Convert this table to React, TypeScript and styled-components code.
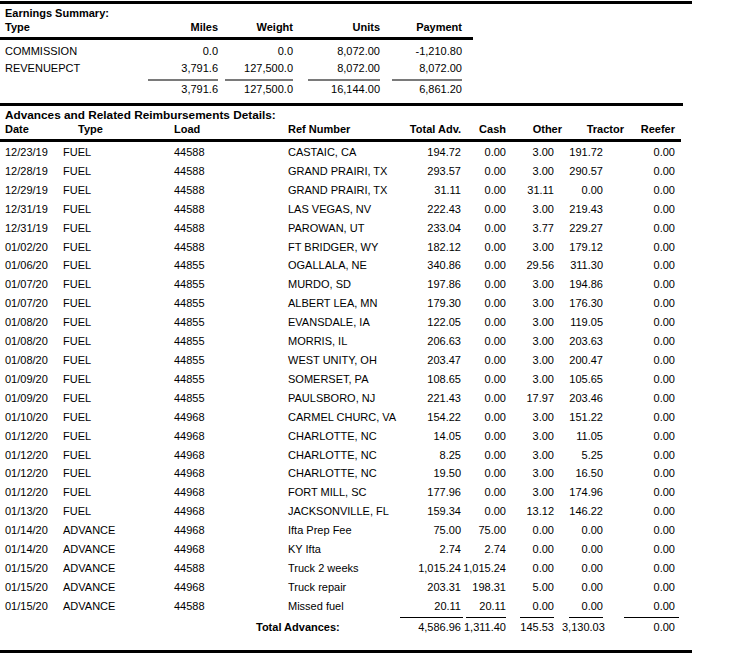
import React from 'react';
import styled, {createGlobalStyle} from 'styled-components';

const GlobalStyle = createGlobalStyle`
    body {
        margin: 0;
        background: #fff;
        color: #000;
        font-family: "Liberation Sans", Arial, sans-serif;
        font-size: 11px;
    }
`;

const Page = styled.div`
    width: 692px;
    display: flex;
    flex-direction: column;
`;

const Rule = styled.div<{$w: number; $t?: number; $mt?: number}>`
    width: ${p => p.$w}px;
    border-top: ${p => p.$t ?? 3}px solid #000;
    margin-top: ${p => p.$mt ?? 0}px;
`;

const SectionTitle = styled.div<{$size?: number}>`
    font-weight: bold;
    font-size: ${p => p.$size ?? 11}px;
    line-height: 14px;
    padding: 2px 0 0 5px;
`;

const Table = styled.table`
    border-collapse: collapse;
    table-layout: fixed;
`;

const Th = styled.th<{$align: string; $pl?: number; $pr?: number}>`
    font-weight: bold;
    height: 14px;
    line-height: 14px;
    padding: 0 ${p => p.$pr ?? 0}px 0 ${p => p.$pl ?? 0}px;
    text-align: ${p => p.$align};
    white-space: nowrap;
`;

const Td = styled.td<{$align: string; $pl?: number; $pr?: number; $h: number}>`
    height: ${p => p.$h}px;
    line-height: ${p => p.$h}px;
    padding: 0 ${p => p.$pr ?? 0}px 0 ${p => p.$pl ?? 0}px;
    text-align: ${p => p.$align};
    white-space: nowrap;
    font-weight: normal;
`;

const LineCell = styled.td<{$pt: number}>`
    padding: ${p => p.$pt}px 0 0 0;
    vertical-align: top;
`;

const SumLine = styled.div<{$w: number; $color: string; $t: number; $pr?: number}>`
    width: ${p => p.$w}px;
    margin-left: auto;
    margin-right: ${p => p.$pr ?? 0}px;
    border-top: ${p => p.$t}px solid ${p => p.$color};
`;

const TotalLabel = styled.td`
    font-weight: bold;
    padding-left: 256px;
    height: 17px;
    line-height: 17px;
`;

type Col = {w: number; label: string; align: string; hpl?: number; hpr?: number; pl?: number; pr?: number; line?: number};

const earnCols: Col[] = [
    {w: 148, label: 'Type', align: 'left', hpl: 5, pl: 5},
    {w: 70, label: 'Miles', align: 'right', line: 70},
    {w: 75, label: 'Weight', align: 'right', line: 68},
    {w: 87, label: 'Units', align: 'right', line: 72},
    {w: 82, label: 'Payment', align: 'right', line: 70},
];

const earnRows = [
    ['COMMISSION', '0.0', '0.0', '8,072.00', '-1,210.80'],
    ['REVENUEPCT', '3,791.6', '127,500.0', '8,072.00', '8,072.00'],
];
const earnTotals = ['', '3,791.6', '127,500.0', '16,144.00', '6,861.20'];

const advCols: Col[] = [
    {w: 63, label: 'Date', align: 'left', hpl: 5, pl: 5},
    {w: 111, label: 'Type', align: 'left', hpl: 15},
    {w: 114, label: 'Load', align: 'left'},
    {w: 112, label: 'Ref Number', align: 'left'},
    {w: 61, label: 'Total Adv.', align: 'right', line: 63},
    {w: 45, label: 'Cash', align: 'right', line: 40},
    {w: 56, label: 'Other', align: 'right', pr: 8, line: 34},
    {w: 62, label: 'Tractor', align: 'right', pr: 21, line: 34},
    {w: 51, label: 'Reefer', align: 'right', line: 55},
];

const advRows = [
    ['12/23/19', 'FUEL', '44588', 'CASTAIC, CA', '194.72', '0.00', '3.00', '191.72', '0.00'],
    ['12/28/19', 'FUEL', '44588', 'GRAND PRAIRI, TX', '293.57', '0.00', '3.00', '290.57', '0.00'],
    ['12/29/19', 'FUEL', '44588', 'GRAND PRAIRI, TX', '31.11', '0.00', '31.11', '0.00', '0.00'],
    ['12/31/19', 'FUEL', '44588', 'LAS VEGAS, NV', '222.43', '0.00', '3.00', '219.43', '0.00'],
    ['12/31/19', 'FUEL', '44588', 'PAROWAN, UT', '233.04', '0.00', '3.77', '229.27', '0.00'],
    ['01/02/20', 'FUEL', '44588', 'FT BRIDGER, WY', '182.12', '0.00', '3.00', '179.12', '0.00'],
    ['01/06/20', 'FUEL', '44855', 'OGALLALA, NE', '340.86', '0.00', '29.56', '311.30', '0.00'],
    ['01/07/20', 'FUEL', '44855', 'MURDO, SD', '197.86', '0.00', '3.00', '194.86', '0.00'],
    ['01/07/20', 'FUEL', '44855', 'ALBERT LEA, MN', '179.30', '0.00', '3.00', '176.30', '0.00'],
    ['01/08/20', 'FUEL', '44855', 'EVANSDALE, IA', '122.05', '0.00', '3.00', '119.05', '0.00'],
    ['01/08/20', 'FUEL', '44855', 'MORRIS, IL', '206.63', '0.00', '3.00', '203.63', '0.00'],
    ['01/08/20', 'FUEL', '44855', 'WEST UNITY, OH', '203.47', '0.00', '3.00', '200.47', '0.00'],
    ['01/09/20', 'FUEL', '44855', 'SOMERSET, PA', '108.65', '0.00', '3.00', '105.65', '0.00'],
    ['01/09/20', 'FUEL', '44855', 'PAULSBORO, NJ', '221.43', '0.00', '17.97', '203.46', '0.00'],
    ['01/10/20', 'FUEL', '44968', 'CARMEL CHURC, VA', '154.22', '0.00', '3.00', '151.22', '0.00'],
    ['01/12/20', 'FUEL', '44968', 'CHARLOTTE, NC', '14.05', '0.00', '3.00', '11.05', '0.00'],
    ['01/12/20', 'FUEL', '44968', 'CHARLOTTE, NC', '8.25', '0.00', '3.00', '5.25', '0.00'],
    ['01/12/20', 'FUEL', '44968', 'CHARLOTTE, NC', '19.50', '0.00', '3.00', '16.50', '0.00'],
    ['01/12/20', 'FUEL', '44968', 'FORT MILL, SC', '177.96', '0.00', '3.00', '174.96', '0.00'],
    ['01/13/20', 'FUEL', '44968', 'JACKSONVILLE, FL', '159.34', '0.00', '13.12', '146.22', '0.00'],
    ['01/14/20', 'ADVANCE', '44968', 'Ifta Prep Fee', '75.00', '75.00', '0.00', '0.00', '0.00'],
    ['01/14/20', 'ADVANCE', '44968', 'KY Ifta', '2.74', '2.74', '0.00', '0.00', '0.00'],
    ['01/15/20', 'ADVANCE', '44588', 'Truck 2 weeks', '1,015.24', '1,015.24', '0.00', '0.00', '0.00'],
    ['01/15/20', 'ADVANCE', '44968', 'Truck repair', '203.31', '198.31', '5.00', '0.00', '0.00'],
    ['01/15/20', 'ADVANCE', '44588', 'Missed fuel', '20.11', '20.11', '0.00', '0.00', '0.00'],
];
const advTotals = ['4,586.96', '1,311.40', '145.53', '3,130.03', '0.00'];

function ColGroup({cols}: {cols: Col[]}) {
    return (
        <colgroup>
            {cols.map((c, i) => <col key={i} style={{width: c.w}} />)}
        </colgroup>
    );
}

export default function App() {
    const numCols = advCols.slice(4);

    return (
        <Page>
            <GlobalStyle />
            <Rule $w={692} $mt={1} />

            {/* earnings */}
            <SectionTitle>Earnings Summary:</SectionTitle>
            <Table style={{width: 462}}>
                <ColGroup cols={earnCols} />
                <thead>
                    <tr>
                        {earnCols.map((c, i) => (
                            <Th key={i} $align={c.align} $pl={c.hpl} $pr={c.hpr}>{c.label}</Th>
                        ))}
                    </tr>
                </thead>
            </Table>
            <Rule $w={473} $mt={3} />
            <Table style={{width: 462, marginTop: 3}}>
                <ColGroup cols={earnCols} />
                <tbody>
                    {earnRows.map((r, ri) => (
                        <tr key={ri}>
                            {r.map((v, i) => (
                                <Td key={i} $h={17} $align={earnCols[i].align} $pl={earnCols[i].pl}>{v}</Td>
                            ))}
                        </tr>
                    ))}
                    <tr>
                        {earnCols.map((c, i) => (
                            <LineCell key={i} $pt={2}>
                                {c.line ? <SumLine $w={c.line} $t={2} $color="#7a7a7a" /> : null}
                            </LineCell>
                        ))}
                    </tr>
                    <tr>
                        {earnTotals.map((v, i) => (
                            <Td key={i} $h={17} $align={earnCols[i].align}>{v}</Td>
                        ))}
                    </tr>
                </tbody>
            </Table>

            <Rule $w={683} $mt={5} />

            {/* advances */}
            <SectionTitle $size={11.8}>Advances and Related Reimbursements Details:</SectionTitle>
            <Table style={{width: 675}}>
                <ColGroup cols={advCols} />
                <thead>
                    <tr>
                        {advCols.map((c, i) => (
                            <Th key={i} $align={c.align} $pl={c.hpl} $pr={c.hpr}>{c.label}</Th>
                        ))}
                    </tr>
                </thead>
            </Table>
            <Rule $w={681} $mt={3} />
            <Table style={{width: 675, marginTop: 1}}>
                <ColGroup cols={advCols} />
                <tbody>
                    {advRows.map((r, ri) => (
                        <tr key={ri}>
                            {r.map((v, i) => (
                                <Td key={i} $h={18.9} $align={advCols[i].align} $pl={advCols[i].pl} $pr={advCols[i].pr}>{v}</Td>
                            ))}
                        </tr>
                    ))}
                    <tr>
                        <LineCell colSpan={4} $pt={1} />
                        {numCols.map((c, i) => (
                            <LineCell key={i} $pt={1}>
                                <SumLine $w={c.line ?? 0} $t={1} $color="#000" $pr={c.pr} />
                            </LineCell>
                        ))}
                    </tr>
                    <tr>
                        <TotalLabel colSpan={4}>Total Advances:</TotalLabel>
                        {advTotals.map((v, i) => (
                            <Td key={i} $h={17} $align="right" $pr={numCols[i].pr}>{v}</Td>
                        ))}
                    </tr>
                </tbody>
            </Table>

            <Rule $w={692} $t={4} $mt={13} />
        </Page>
    );
}
